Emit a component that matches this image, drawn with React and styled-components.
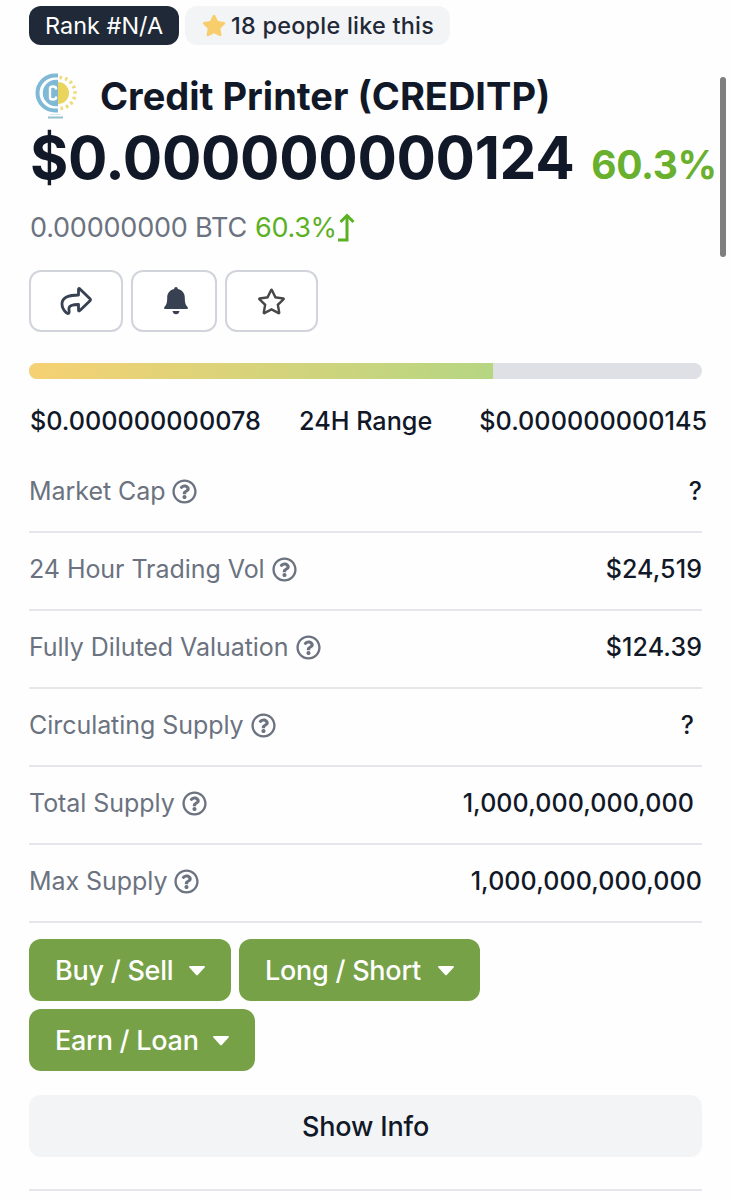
import React from "react";
import styled, { createGlobalStyle } from "styled-components";
import { FaRegStar, FaStar, FaRegQuestionCircle } from "react-icons/fa";

const GlobalStyle = createGlobalStyle`
  * {
    box-sizing: border-box;
  }

  html {
    overflow: hidden;
  }

  body {
    margin: 0;
    background-color: #fefefe;
    font-family: "Inter", sans-serif;
    color: #111827;
  }
`;

const Page = styled.main`
  width: 731px;
  height: 1200px;
  padding: 6px 29px 0;
  overflow: hidden;
  position: relative;
`;

const ScrollThumb = styled.div`
  position: absolute;
  top: 77px;
  right: 5px;
  width: 6px;
  height: 180px;
  border-radius: 3px;
  background-color: #7f7f7f;
`;

const Badges = styled.div`
  display: flex;
  gap: 6px;
  height: 39px;
`;

const Badge = styled.span`
  display: flex;
  align-items: center;
  width: ${({ $dark }) => ($dark ? "150px" : "265px")};
  padding: ${({ $dark }) => ($dark ? "0 16px" : "0 16px 0 17px")};
  border-radius: 12px;
  font-size: 23.4px;
  font-weight: ${({ $dark }) => ($dark ? 400 : 450)};
  letter-spacing: ${({ $dark }) => ($dark ? "0.05px" : "0.25px")};
  white-space: nowrap;
  color: ${({ $dark }) => ($dark ? "#fff" : "#1f2937")};
  background-color: ${({ $dark }) => ($dark ? "#1f2937" : "#f3f4f6")};
`;

const BadgeStar = styled(FaStar)`
  width: 25px;
  height: 25px;
  margin-right: 5px;
  color: #f8cd6b;
`;

const Heading = styled.header`
  display: flex;
  align-items: center;
  height: 46px;
  margin-top: 28px;
`;

const Logo = styled.svg`
  width: 48px;
  height: 48px;
  margin: 0 20px 0 3px;
`;

const Title = styled.h1`
  margin: 0;
  font-size: 38px;
  font-weight: 700;
  line-height: 46px;
  letter-spacing: 0;
  white-space: nowrap;
`;

const PriceLine = styled.div`
  display: flex;
  align-items: baseline;
  height: 76px;
  margin-top: 1px;
  padding-left: 1px;
  line-height: 76px;
  white-space: nowrap;
`;

const Price = styled.span`
  font-size: 58.5px;
  font-weight: 650;
  letter-spacing: -0.35px;
`;

const PriceChange = styled.span`
  margin-left: 17px;
  font-size: 39px;
  font-weight: 650;
  letter-spacing: -0.4px;
  color: #69b02f;
`;

const BtcLine = styled.div`
  display: flex;
  align-items: center;
  height: 40px;
  margin-top: 12px;
  padding-left: 1px;
  font-size: 27px;
  line-height: 40px;
  letter-spacing: -0.2px;
  color: #6b7280;
`;

const BtcChange = styled.span`
  margin-left: 8px;
  letter-spacing: -0.3px;
  color: #5cb024;
`;

const UpArrow = styled.svg`
  width: 18px;
  height: 30px;
`;

const Actions = styled.div`
  display: flex;
  gap: 8px;
  margin-top: 22px;
`;

const ActionButton = styled.button`
  display: flex;
  align-items: center;
  justify-content: center;
  width: ${({ $width }) => $width}px;
  height: 62px;
  padding: 0 0 0 ${({ $shift }) => $shift || 0}px;
  border: 2px solid #d1d5db;
  border-radius: 12px;
  background-color: #fff;
  color: #374151;
`;

const RangeBar = styled.div`
  height: 16px;
  margin-top: 31px;
  border-radius: 8px;
  overflow: hidden;
  background-color: #dfe0e6;
`;

const RangeFill = styled.div`
  width: 464px;
  height: 100%;
  background: linear-gradient(to right, #f6d173, #b6d682);
`;

const RangeLabels = styled.div`
  display: grid;
  grid-template-columns: 269px 1fr auto;
  height: 40px;
  margin: 22px -5px 0 1px;
  font-size: 25.2px;
  font-weight: 450;
  line-height: 40px;
  white-space: nowrap;
`;

const Stats = styled.section`
  margin-top: 14px;
`;

const StatRow = styled.div`
  display: flex;
  justify-content: space-between;
  align-items: center;
  height: 78px;
  padding-bottom: 4px;
  border-bottom: 2px solid #e5e7eb;
  font-size: 25px;
  letter-spacing: -0.05px;
`;

const StatLabel = styled.span`
  display: flex;
  align-items: center;
  gap: 7px;
  color: #6b7280;
`;

const StatValue = styled.span`
  padding-right: ${({ $inset }) => ($inset ? "8px" : 0)};
  font-weight: 500;
  letter-spacing: 0.1px;
`;

const Trades = styled.div`
  display: flex;
  flex-wrap: wrap;
  gap: 8px;
  margin-top: 16px;
`;

const TradeButton = styled.button`
  display: flex;
  align-items: center;
  justify-content: space-between;
  width: ${({ $width }) => $width}px;
  height: 62px;
  padding: 1px 26px 0;
  border: 0;
  border-radius: 12px;
  background-color: #76a146;
  color: #fff;
  font-family: inherit;
  font-size: 27px;
  font-weight: 450;
  letter-spacing: -0.25px;
  white-space: nowrap;
`;

const InfoButton = styled.button`
  display: block;
  width: 100%;
  height: 62px;
  margin-top: 24px;
  padding: 1px 0 0;
  border: 0;
  border-radius: 12px;
  background-color: #f3f4f6;
  color: #111827;
  font-family: inherit;
  font-size: 27px;
  font-weight: 450;
  letter-spacing: -0.15px;
`;

const Divider = styled.hr`
  height: 2px;
  margin: 32px 0 0;
  border: 0;
  background-color: #e5e7eb;
`;

const stats = [
  { label: "Market Cap", value: "?" },
  { label: "24 Hour Trading Vol", value: "$24,519" },
  { label: "Fully Diluted Valuation", value: "$124.39" },
  { label: "Circulating Supply", value: "?", inset: true },
  { label: "Total Supply", value: "1,000,000,000,000", inset: true },
  { label: "Max Supply", value: "1,000,000,000,000" }
];

const trades = [
  { label: "Buy / Sell", width: 202 },
  { label: "Long / Short", width: 241 },
  { label: "Earn / Loan", width: 226 }
];

const CoinLogo = () => (
  <Logo viewBox="0 0 48 48" fill="none">
    <path d="M26 3.5h-3a17.500 17.500 0 0 0 0 35h3" stroke="#7fb9d6" strokeWidth="4" />
    <path d="M26 9.500h-2a11.500 11.500 0 0 0 0 23h2" stroke="#7fb9d6" strokeWidth="3.500" />
    <path d="M26 10.500h-2a10.500 10.500 0 0 0 0 21h2z" fill="#7fb9d6" />
    <path d="M26 10a11 11 0 0 1 0 22z" fill="#e9d55c" />
    <path
      d="M24 17.500v-1q0-2-3-2t-3 2v9q0 2 3 2t3-2v-1"
      stroke="#fff"
      strokeWidth="2.400"
    />
    <path
      d="M27.500 5.500a15.500 15.500 0 0 1 0 31"
      stroke="#eddc7c"
      strokeWidth="3.600"
      strokeDasharray="2.600 3"
    />
    <path d="M18 42.500h10" stroke="#d3e8ee" strokeWidth="1" />
    <path d="M16 45.500h15" stroke="#93c2cd" strokeWidth="2" />
  </Logo>
);

const ShareIcon = () => (
  <svg width="32" height="30" viewBox="0 0 32 30" fill="none">
    <path
      d="M18.500 3.500q0-1.800 1.400-.6L30 12.800q1 1 0 2L19.900 24.500q-1.400 1.200-1.400-.6v-5.400c-6.500 0-9 1.200-9.500 3.500-.3 1.700.5 3.200 0 4.700-.4 1.200-1.700 1.100-2.500.2-3-2.700-4.900-6.200-4.400-10.300C3 11 9.500 9 18.500 9z"
      stroke="currentColor"
      strokeWidth="2.800"
      strokeLinejoin="round"
    />
  </svg>
);

const BellIcon = () => (
  <svg width="24" height="28" viewBox="0 0 24 28" fill="currentColor">
    <path d="M12 0c1.200 0 1.800.8 1.800 1.900 4.400.9 7 4.200 7 8.600 0 5 .6 7.200 2.700 9.400.9 1 .3 2.100-.9 2.100H1.400c-1.200 0-1.800-1.100-.9-2.100 2.100-2.200 2.700-4.400 2.700-9.400 0-4.400 2.600-7.700 7-8.600C10.200.8 10.800 0 12 0z" />
    <path d="M8.500 24h7c-.3 2-1.700 3.300-3.500 3.300S8.800 26 8.500 24z" />
  </svg>
);

const Caret = () => (
  <svg width="16" height="10" viewBox="0 0 16 10" fill="currentColor">
    <path d="M1 0h14c1 0 1.300.9.600 1.600L9 8.800q-1 1-2 0L.4 1.600C-.3.900 0 0 1 0z" />
  </svg>
);

const App = () => {
  return (
    <>
      <GlobalStyle />
      <Page>
        <Badges>
          <Badge $dark>Rank #N/A</Badge>
          <Badge>
            <BadgeStar />
            18 people like this
          </Badge>
        </Badges>
        <Heading>
          <CoinLogo />
          <Title>Credit Printer (CREDITP)</Title>
        </Heading>
        <PriceLine>
          <Price>$0.000000000124</Price>
          <PriceChange>60.3%</PriceChange>
        </PriceLine>
        <BtcLine>
          <span>0.00000000 BTC</span>
          <BtcChange>60.3%</BtcChange>
          <UpArrow viewBox="0 0 18 30" fill="none" stroke="#5cb024">
            <path d="M3.500 9l6.500-6.500L16.500 9" strokeWidth="3" />
            <path d="M1 27h9V3" strokeWidth="3" />
          </UpArrow>
        </BtcLine>
        <Actions>
          <ActionButton $width={94} aria-label="Share">
            <ShareIcon />
          </ActionButton>
          <ActionButton $width={86} $shift={4} aria-label="Alerts">
            <BellIcon />
          </ActionButton>
          <ActionButton $width={93} aria-label="Favorite">
            <FaRegStar size={29} color="#474747" />
          </ActionButton>
        </Actions>
        <RangeBar>
          <RangeFill />
        </RangeBar>
        <RangeLabels>
          <span>$0.000000000078</span>
          <span>24H Range</span>
          <span>$0.000000000145</span>
        </RangeLabels>
        <Stats>
          {stats.map(({ label, value, inset }) => (
            <StatRow key={label}>
              <StatLabel>
                {label}
                <FaRegQuestionCircle size={25} />
              </StatLabel>
              <StatValue $inset={inset}>{value}</StatValue>
            </StatRow>
          ))}
        </Stats>
        <Trades>
          {trades.map(({ label, width }) => (
            <TradeButton key={label} $width={width}>
              {label}
              <Caret />
            </TradeButton>
          ))}
        </Trades>
        <InfoButton>Show Info</InfoButton>
        <Divider />
        <ScrollThumb />
      </Page>
    </>
  );
};

export default App;
